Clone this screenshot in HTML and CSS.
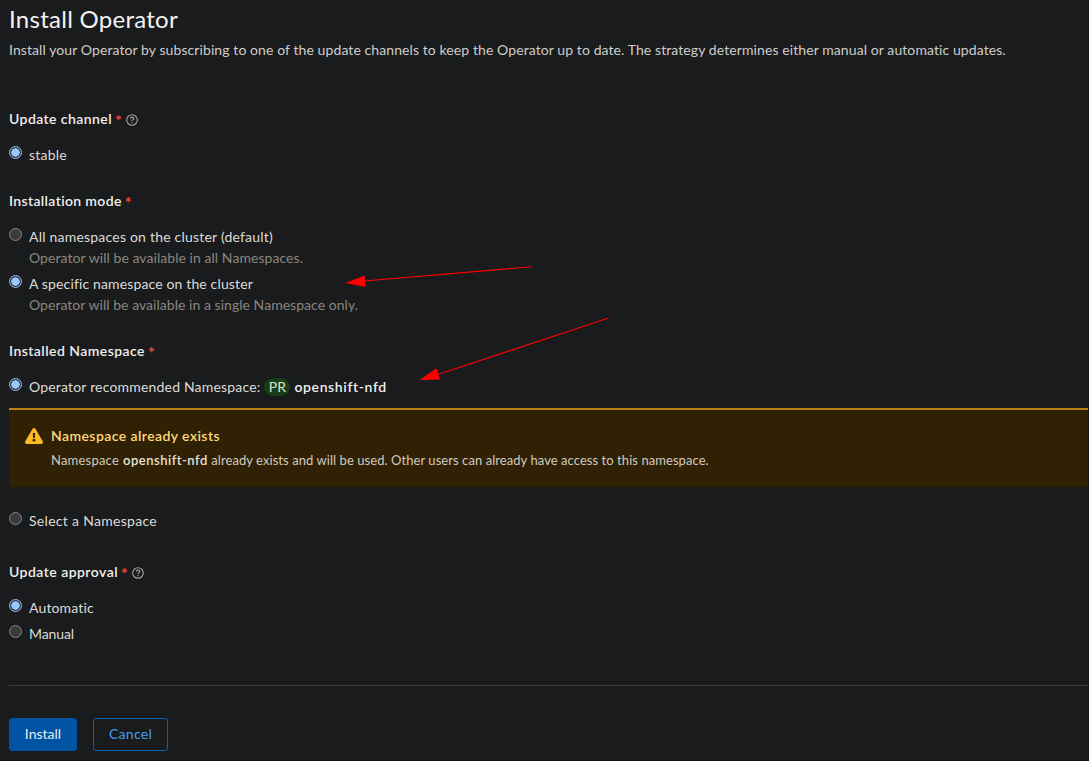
FILE: index.html
```html
<!DOCTYPE html>
<html lang="en">
<head>
<meta charset="utf-8">
<title>Install Operator</title>
<link rel="stylesheet" href="styles.css">
</head>
<body>
<main class="page">
  <h1 class="title">Install Operator</h1>
  <p class="subtitle">Install your Operator by subscribing to one of the update channels to keep the Operator up to date. The strategy determines either manual or automatic updates.</p>

  <form class="form">
    <section class="group">
      <h2 class="label"><span class="t-channel">Update channel</span><span class="req">*</span>
        <svg class="help" viewBox="0 0 12 12"><circle cx="6" cy="6" r="5.3"/><path d="M4.3 4.7C4.4 3.600 5.1 3.100 6 3.100s1.800.6 1.800 1.500C7.800 5.700 6 5.700 6 7"/><path d="M6 7.900v1.300"/></svg>
      </h2>
      <label class="option"><input class="radio" type="radio" name="channel" checked><span class="t-stable">stable</span></label>
    </section>

    <section class="group">
      <h2 class="label"><span class="t-mode">Installation mode</span><span class="req">*</span></h2>
      <div class="stack">
        <label class="option"><input class="radio" type="radio" name="mode"><span class="t-all">All namespaces on the cluster (default)</span></label>
        <p class="hint">Operator will be available in all Namespaces.</p>
        <label class="option"><input class="radio" type="radio" name="mode" checked><span class="t-specific">A specific namespace on the cluster</span></label>
        <p class="hint hint-single">Operator will be available in a single Namespace only.</p>
      </div>
    </section>

    <section class="group group-namespace">
      <h2 class="label"><span class="t-installed">Installed Namespace</span><span class="req">*</span></h2>
      <label class="option"><input class="radio" type="radio" name="ns" checked><span class="t-recommended">Operator recommended Namespace:</span><span class="badge">PR</span><strong class="ns-name">openshift-nfd</strong></label>
      <div class="alert">
        <svg class="alert-icon" viewBox="0 0 18 16"><path d="M7.600.800Q9-.8 10.400.800L17.700 13.300Q18.500 15.700 16.500 16H1.500Q-.5 15.700.300 13.300Z" fill="#fdba25"/><path d="M7.800 5h2.400l-.4 5H8.200z" fill="#302105"/><circle cx="9" cy="12.200" r="1.400" fill="#302105"/></svg>
        <div class="alert-body">
          <h3 class="alert-title">Namespace already exists</h3>
          <p class="alert-text"><span class="a-first">Namespace</span><strong class="a-name">openshift-nfd</strong><span class="a-rest">already exists and will be used. Other users can already have access to this namespace.</span></p>
        </div>
      </div>
      <label class="option"><input class="radio" type="radio" name="ns"><span class="t-select">Select a Namespace</span></label>
    </section>

    <section class="group group-approval">
      <h2 class="label"><span class="t-approval">Update approval</span><span class="req">*</span>
        <svg class="help" viewBox="0 0 12 12"><circle cx="6" cy="6" r="5.3"/><path d="M4.3 4.7C4.4 3.600 5.1 3.100 6 3.100s1.800.6 1.800 1.500C7.800 5.700 6 5.700 6 7"/><path d="M6 7.900v1.300"/></svg>
      </h2>
      <div class="stack stack-spaced">
        <label class="option"><input class="radio" type="radio" name="approval" checked><span class="t-auto">Automatic</span></label>
        <label class="option"><input class="radio" type="radio" name="approval"><span class="t-manual">Manual</span></label>
      </div>
    </section>

    <hr class="divider">
    <div class="actions">
      <button class="btn btn-primary" type="button">Install</button>
      <button class="btn btn-secondary" type="button">Cancel</button>
    </div>
  </form>

  <svg class="arrows" viewBox="0 0 1089 761">
    <path d="M531.500 266.800L364 281M608.500 318L438 374.500" stroke="#f00" stroke-width="1.100"/>
    <path d="M345.500 283L364.800 275.500L365.500 287ZM419.500 380L436.500 368.300L440 379.500Z" fill="#f00"/>
  </svg>
</main>
</body>
</html>
```
FILE: styles.css
```css
* { box-sizing: border-box; }
body { margin: 0; background: #1a1b1d; color: #e0dfdc; font: 14px/21px Lato, sans-serif; }
h1, h2, h3, p { margin: 0; }

.page { position: relative; width: 1089px; height: 761px; padding: 5px 1px 0 9px; overflow: hidden; white-space: nowrap; border-bottom: 1px solid #111; }
.title { height: 29px; font-size: 24px; line-height: 27px; font-weight: 400; letter-spacing: .27px; color: #f3f2f0; }
.subtitle { margin-top: 5px; letter-spacing: .089px; color: #cfcdc9; }

.form { padding-top: 49px; }
.group { margin-bottom: 25px; display: flex; flex-direction: column; gap: 15px; }
.group-namespace { margin-bottom: 30px; }
.group-approval { margin-bottom: 40px; }
.label { display: flex; height: 21px; font-size: 14px; line-height: 19px; font-weight: 600; color: #f0efed; }
.req { margin-left: 3px; width: 7px; color: #f0493f; font-size: 16px; line-height: 21px; font-weight: 700; }
.help { width: 12px; height: 12px; margin: 5px 0 0 4px; fill: none; stroke: #a8a295; stroke-width: 1.1; }

.option { display: flex; height: 21px; line-height: 19px; color: #dedcd8; }
.radio { appearance: none; width: 13px; height: 13px; margin: 1px 7px 0 0; flex: none; border: 1px solid #858585; border-radius: 50%; background: #3b3b3b; }
.radio:checked { border-color: #99b9e8; background: radial-gradient(circle, #99c8ff 3.9px, #303743 4.5px); }
.hint { height: 21px; padding-left: 20px; line-height: 19px; letter-spacing: .054px; color: #8b867d; }
.hint-single { letter-spacing: .036px; }
.stack { display: flex; flex-direction: column; }
.stack .hint + .option { margin-top: 5px; }
.stack-spaced { gap: 5px; }

.badge { width: 26px; height: 18px; margin: 1px 4px 0 4px; border-radius: 9px; background: #183d18; color: #d5e8cc; line-height: 18px; text-align: center; }
.ns-name { font-weight: 600; letter-spacing: .617px; color: #f2f0ed; }

.alert { display: flex; height: 79px; margin: -5px 0 9px; padding: 15px 16px; background: #302105; border-top: 2px solid #b98412; }
.alert-icon { width: 18px; height: 16px; margin-top: 3px; flex: none; }
.alert-body { padding-left: 8px; }
.alert-title { height: 21px; font-size: 14px; line-height: 21px; font-weight: 600; letter-spacing: .43px; color: #ffd978; }
.alert-text { display: flex; gap: 4px; margin-top: 4px; font-size: 13px; line-height: 20px; color: #cfcabf; }
.a-first { letter-spacing: .212px; }
.a-name { font-weight: 600; letter-spacing: .5px; color: #e6e2d9; }
.a-rest { margin-left: -.5px; letter-spacing: .063px; }

.t-channel { letter-spacing: .427px; }
.t-stable { letter-spacing: .237px; }
.t-mode { letter-spacing: .359px; }
.t-all { letter-spacing: .212px; }
.t-specific { letter-spacing: .14px; }
.t-installed { letter-spacing: .453px; }
.t-recommended { letter-spacing: .185px; }
.t-select { letter-spacing: .298px; }
.t-approval { letter-spacing: .467px; }
.t-auto { letter-spacing: .141px; }
.t-manual { letter-spacing: -.107px; }

.divider { height: 1px; margin: 0; border: 0; background: #3c3d3f; }
.actions { display: flex; gap: 16px; margin-top: 32px; }
.btn { height: 33px; padding: 0 0 2px; border: 1px solid #0052a3; border-radius: 3px; font: 14px/21px Lato, sans-serif; }
.btn-primary { width: 68px; background: #0052a3; color: #e6eaf0; }
.btn-secondary { width: 75px; border-color: #0b60b8; background: transparent; color: #429ee8; letter-spacing: .268px; }

/* pointer arrows drawn over the form */
.arrows { position: absolute; left: 0; top: 0; width: 1089px; height: 761px; pointer-events: none; }
```
